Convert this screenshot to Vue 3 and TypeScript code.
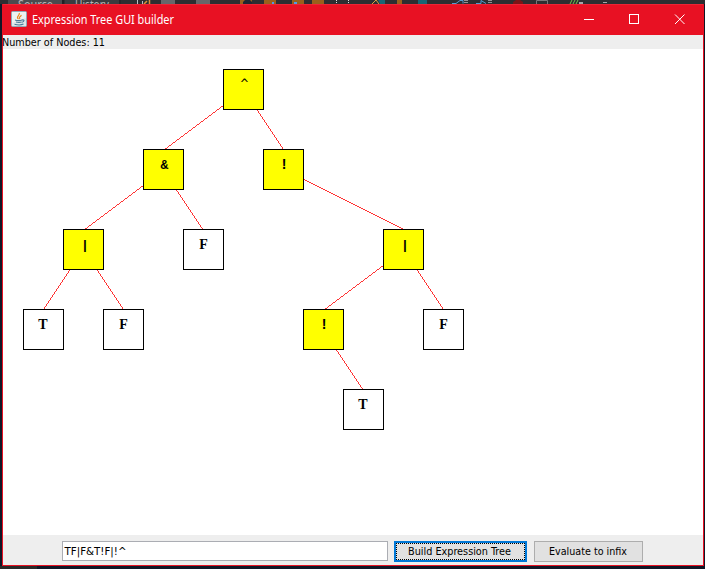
<script setup lang="ts">
interface TreeNode { label: string; x: number; y: number; op: boolean; dx: number; dy: number; kind: string }
interface Edge { x1: number; y1: number; x2: number; y2: number }

const nodes: TreeNode[] = [
  { label: '^', x: 220, y: 20, op: true, dx: 21.5, dy: 19, kind: 'caret' },
  { label: '&', x: 140, y: 100, op: true, dx: 21.5, dy: 20, kind: 'amp' },
  { label: '!', x: 260, y: 100, op: true, dx: 21, dy: 20, kind: 'bang' },
  { label: '|', x: 60, y: 180, op: true, dx: 22, dy: 20, kind: 'bar' },
  { label: 'F', x: 180, y: 180, op: false, dx: 20.5, dy: 20, kind: 'leaf' },
  { label: '|', x: 380, y: 180, op: true, dx: 22, dy: 20, kind: 'bar' },
  { label: 'T', x: 20, y: 260, op: false, dx: 20, dy: 20, kind: 'leaf' },
  { label: 'F', x: 100, y: 260, op: false, dx: 20.5, dy: 20, kind: 'leaf' },
  { label: '!', x: 300, y: 260, op: true, dx: 21, dy: 20, kind: 'bang' },
  { label: 'F', x: 420, y: 260, op: false, dx: 20.5, dy: 20, kind: 'leaf' },
  { label: 'T', x: 340, y: 340, op: false, dx: 20, dy: 20, kind: 'leaf' },
]

const links: [number, number][] = [[0, 1], [0, 2], [1, 3], [1, 4], [2, 5], [3, 6], [3, 7], [5, 8], [5, 9], [8, 10]]
const edges: Edge[] = links.map(([a, b]) => ({
  x1: nodes[a].x + 20, y1: nodes[a].y + 20, x2: nodes[b].x + 20, y2: nodes[b].y,
}))
const expression = 'TF|F&T!F|!^'
</script>

<template>
  <div class="desktop">
    <svg class="backdrop" width="705" height="4">
      <rect width="705" height="4" fill="#2d2e31" />
      <rect x="8" width="54" height="4" fill="#4a4b4e" />
      <rect x="62" width="2" height="4" fill="#202124" />
      <rect x="65" width="54" height="4" fill="#3a3b3e" />
      <text x="18" y="9" textLength="35" lengthAdjust="spacingAndGlyphs">Source</text>
      <text x="75" y="9" textLength="34" lengthAdjust="spacingAndGlyphs">History</text>
      <path d="M120 0v4" stroke="#202124" />
      <path d="M137.500 0v4M142.500 1v3" stroke="#b9bec5" />
      <path d="M144 4l3-3M149.500 0v4" stroke="#d99438" stroke-width="1.500" />
      <path d="M161 0h14v4h-14zM196 0h14v4h-14z" fill="#66676a" />
      <path d="M240 0h12v4h-12zM264 0h12v4h-12zM292 0h12v4h-12zM312 0h12v4h-12zM397 0h5v4h-5z" fill="#99601c" />
      <path d="M243 4v-2l2-2h5l2 2v2z" fill="#202632" />
      <path d="M272 2h2v2h-2zM294 2h3v2h-3z" fill="#4f9ce7" />
      <path d="M336 0h1v1h-1zM336 2h1v1h-1zM348 0h1v1h-1zM348 2h1v1h-1z" fill="#ddd" />
      <path d="M372 4l4-4 3 4" fill="none" stroke="#d9a442" />
      <path d="M378 0h7v4h-5zM418 0h9v4h-9z" fill="#176674" />
      <path d="M452 3.500h4l4-3h3v3M476 3.500h5V.5l5 3" fill="none" stroke="#539bd1" />
      <path d="M464 0h4v1h-4zM464 2h4v1h-4zM488 0h4v1h-4zM488 2h4v1h-4z" fill="#909194" />
      <path d="M513 4v-2l3-2h4l3 2v2z" fill="#7d1417" />
      <path d="M536.500 4V.5h11v3.500" fill="none" stroke="#77787a" />
      <path d="M570 4l2-4M573 4l2-4M576 4l2-4" stroke="#70c54b" />
      <path d="M579 2h4v2h-4zM603 2h4v1h-4z" fill="#a5a6a9" />
    </svg>
    <main class="window">
      <header class="titlebar">
        <svg class="java" viewBox="0 0 16 16">
          <rect x=".5" y=".5" width="15" height="15" rx="1" fill="#dde6e9" stroke="#8eabb8" />
          <path d="M1 1h14v6L1 12z" fill="#f4f6f4" opacity=".7" />
          <path d="M7.500 8C4.500 5.700 9 4.800 8.300 2M9 8C7.500 6.400 9 5.700 10.500 4.300" fill="none" stroke="#e88922" stroke-width="1.200" />
          <path d="M4 9c2 .6 5 .6 7 0M5 11c2 .5 4 .5 5.500 0M11 9c2.800-.6 2.400 1.800-.2 2.200M3.500 13.300c3 .8 7 .7 9-.2" fill="none" stroke="#487998" stroke-width="1.100" />
        </svg>
        <svg class="title" width="160" height="20"><text x="0" y="14" textLength="142" lengthAdjust="spacingAndGlyphs">Expression Tree GUI builder</text></svg>
        <svg class="controls" width="120" height="31" fill="none" stroke="#fff">
          <path d="M0 15.500h10" />
          <rect x="45.500" y="10.500" width="9" height="9" />
          <path d="M91 10.500l9.500 9.500M100.500 10.500L91 20" />
        </svg>
      </header>
      <div class="status"><svg width="130" height="14"><text x="0" y="11" textLength="103" lengthAdjust="spacingAndGlyphs">Number of Nodes: 11</text></svg></div>
      <svg class="tree" width="700" height="486">
        <g class="edges"><line v-for="(e, i) in edges" :key="i" :x1="e.x1 + .5" :y1="e.y1 + .5" :x2="e.x2 + .5" :y2="e.y2 + .5" /></g>
        <g v-for="(n, i) in nodes" :key="i">
          <rect :x="n.x + .5" :y="n.y + .5" width="40" height="40" :class="n.op ? 'operator' : 'operand'" />
          <text :class="n.kind" :x="n.x + n.dx" :y="n.y + n.dy" text-anchor="middle">{{ n.label }}</text>
        </g>
      </svg>
      <footer class="toolbar">
        <div class="field"><svg width="100" height="18"><text x="1.500" y="13" textLength="62" lengthAdjust="spacingAndGlyphs">{{ expression }}</text></svg></div>
        <button class="build"><svg width="106" height="15"><text x="0" y="11" textLength="103" lengthAdjust="spacingAndGlyphs">Build Expression Tree</text></svg></button>
        <button class="evaluate"><svg width="82" height="15"><text x="1" y="11" textLength="78" lengthAdjust="spacingAndGlyphs">Evaluate to infix</text></svg></button>
      </footer>
    </main>
    <div class="below"></div>
  </div>
</template>

<style>
body { margin: 0; overflow: hidden; }
</style>
<style scoped>
.desktop { width: 705px; height: 569px; background: #101626; font: 11px "DejaVu Sans Condensed", "DejaVu Sans", sans-serif; overflow: hidden; }
svg { display: block; flex: none; }
.backdrop text { font: 12px "Noto Sans", sans-serif; fill: #b4b5b8; }
.window { box-sizing: border-box; width: 702px; height: 562px; margin-left: 2px; border: 1px solid #e81123; border-top: 0; display: flex; flex-direction: column; }
.titlebar { height: 31px; flex: none; background: #e81123; display: flex; align-items: center; box-shadow: inset 0 1px #ee2434; }
.java { width: 16px; height: 16px; margin-left: 8px; margin-top: -1px; }
.title { margin-left: 5px; fill: #fff; font: 12px "Noto Sans", sans-serif; }
.controls { margin-left: auto; margin-right: -1px; }
.status { height: 14px; flex: none; background: #eee; }
.status svg { margin-left: -1px; }
.tree { background: #fff; }
.edges { stroke: #f00; stroke-width: .8; shape-rendering: crispEdges; }
.tree rect { stroke: #000; stroke-width: 1; shape-rendering: crispEdges; }
.operator { fill: #ff0; }
.operand { fill: #fff; }
.leaf { font: bold 14px "Liberation Serif", serif; }
.caret { font: 13px "DejaVu Sans Mono", monospace; }
.amp { font: bold 13px "Liberation Mono", monospace; }
.bang { font: bold 14px "Liberation Sans", sans-serif; }
.bar { font: bold 13px "Liberation Mono", monospace; }
.toolbar { height: 30px; flex: none; background: #eee; display: flex; align-items: flex-start; padding: 6px 0 0 59px; box-sizing: border-box; }
.field { box-sizing: border-box; width: 326px; height: 20px; border: 1px solid #abadb3; background: #fff; }
button { box-sizing: border-box; height: 21px; padding: 0; border: 1px solid #adadad; background: #e1e1e1; display: flex; align-items: center; justify-content: center; }
button svg { font: 11px "DejaVu Sans Condensed", "DejaVu Sans", sans-serif; }
.build { width: 133px; margin-left: 6px; border: 2px solid #0078d7; outline: 1px dotted #000; outline-offset: -3px; }
.evaluate { width: 109px; margin-left: 7px; }
.below { height: 3px; width: 37px; background: #292929; }
</style>
